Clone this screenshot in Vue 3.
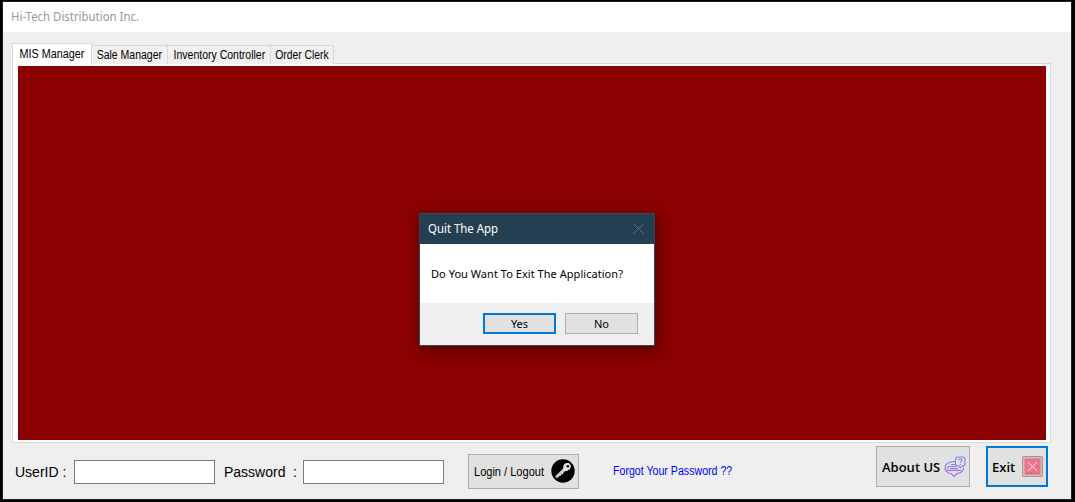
<script setup>
const tabs = [
  { label: 'MIS Manager', cls: 'mis' },
  { label: 'Sale Manager', cls: 'sale' },
  { label: 'Inventory Controller', cls: 'inventory' },
  { label: 'Order Clerk', cls: 'clerk' },
]
</script>

<template>
  <div class="screen">
    <main class="window">
      <header class="titlebar"><span class="app-title">Hi-Tech Distribution Inc.</span></header>

      <nav class="tabs">
        <button v-for="(tab, i) in tabs" :key="tab.label" class="tab" :class="[tab.cls, { active: i === 0 }]">
          <span>{{ tab.label }}</span>
        </button>
      </nav>
      <section class="panel"><div class="canvas"></div></section>

      <footer class="bar">
        <label class="label user">UserID :</label>
        <input class="field" type="text" />
        <label class="label pass"><span>Password</span><span>:</span></label>
        <input class="field" type="password" />
        <button class="btn login">
          <span class="login-text">Login / Logout</span>
          <svg width="24" height="24" viewBox="0 0 24 24">
            <circle cx="12" cy="12" r="11.7" fill="#000" />
            <path d="M12.600 6 14.600 4.200 17.500 3.700 20 6.400 19.200 9.800 16.500 11.800 13.700 12.200 12.500 13.400 12 15 10.300 15.200 9.800 16.800 8 17.200 6.900 18.600 4.600 18.700 4.600 17 12 9.800Z" fill="#e4e4e4" />
            <circle cx="16.800" cy="7.200" r="1.300" fill="#000" />
            <path d="M6 17.600 12.600 11.200" stroke="#888" stroke-width=".6" />
          </svg>
        </button>
        <a class="forgot">Forgot Your Password ??</a>
        <button class="btn about">
          <span class="about-text">About US</span>
          <svg width="22" height="22" viewBox="0 0 22 22" fill="none">
            <defs>
              <linearGradient id="violet" x1="0" y1="0" x2="0" y2="22" gradientUnits="userSpaceOnUse">
                <stop stop-color="#668cf4" /><stop offset="1" stop-color="#b45cf0" />
              </linearGradient>
            </defs>
            <g stroke="url(#violet)" stroke-width="1.1">
              <path d="M11 5.500C5 5.200 1 8 1 12c0 2.600 2 4.500 4.500 5.300l1.500.2 3 3 3-3c4.300-.6 6.600-2.600 6.600-6" />
              <path d="M14 1h4.500c1.500 0 2.500 1 2.500 2.500v4c0 1.500-1 2.500-2.500 2.500h-.7l-1.600 1.800L15 10h-1c-1.500 0-2.500-1-2.500-2.500v-4C11.500 2 12.500 1 14 1Z" />
              <path d="M4.500 10.500h8M7 8.500h4M3 14.500h14M6 12.600h8M4.500 10.500 3 13.500" />
              <path d="M14.700 4.200c0-2 3.200-2 3.200 0 0 1.200-1.600 1.200-1.600 2.600M16.300 8v.8" />
            </g>
          </svg>
        </button>
        <button class="btn exit">
          <span class="exit-text">Exit</span>
          <svg width="21" height="21" viewBox="0 0 21 21">
            <rect x=".6" y=".6" width="19.800" height="19.800" rx="1.200" fill="#e7ce97" stroke="#b18cab" stroke-width="1.200" />
            <rect x="2.900" y="2.900" width="15.200" height="15.200" fill="#ed7591" stroke="#c37b91" stroke-width=".8" />
            <path d="M6 6.200 15 15M15 6.200 6 15" stroke="#ffe1e7" stroke-width="1" />
            <path d="M5 17.300h11" stroke="#c3477a" stroke-width="1" stroke-dasharray="1 1" />
          </svg>
        </button>
      </footer>
    </main>

    <div class="dialog" role="dialog">
      <div class="dialog-head">
        <span class="dialog-title">Quit The App</span>
        <svg width="11" height="11" viewBox="0 0 11 11"><path d="M.5.5l10 10M10.500.5l-10 10" stroke="#5d707e" fill="none" /></svg>
      </div>
      <div class="dialog-body"><span class="question">Do You Want To Exit The Application?</span></div>
      <div class="dialog-foot">
        <button class="btn choice yes">Yes</button>
        <button class="btn choice">No</button>
      </div>
    </div>
  </div>
</template>

<style>
body { margin: 0; background: #000; }
</style>

<style scoped>
* { box-sizing: border-box; }
button, input { margin: 0; padding: 0; font: inherit; color: inherit; border-radius: 0; outline: 0; }
span, label, a { white-space: nowrap; }
svg { display: block; flex: none; }
.screen { position: relative; width: 1075px; height: 502px; padding: 1px 3px 2px 2px; background: #000; overflow: hidden; color: #000; font-family: "Liberation Sans", Arial, sans-serif; }
.window { width: 1070px; height: 499px; border: 1px solid #202020; background: #efefef; }
.titlebar { height: 30px; background: #fff; padding: 0 0 1px 8px; display: flex; align-items: center; color: #999; font: 12px "Noto Sans", sans-serif; }
.app-title { transform: scaleX(.95); transform-origin: left; }
.tabs { position: relative; z-index: 1; display: flex; align-items: flex-end; height: 32px; padding-left: 9px; }
.tab { height: 19px; border: 1px solid #d9d9d9; border-left: 0; border-bottom: 0; background: #f0f0f0; display: flex; align-items: center; justify-content: center; font-size: 12px; }
.tab span { transform: scaleX(.875); }
.tab.active { height: 22px; border-left: 1px solid #d9d9d9; background: #fff; margin-bottom: -1px; padding-bottom: 2px; }
.mis { width: 80px; }
.sale { width: 76px; }
.inventory { width: 103px; }
.clerk { width: 63px; }
.tab.mis span { transform: scaleX(.9); }
.tab.clerk span { transform: scaleX(.86); }
.panel { width: 1039px; height: 380px; margin: -1px 0 0 9px; padding: 2px 4px 2px 5px; border: 1px solid #d9d9d9; background: #fff; }
.canvas { height: 374px; background: #8b0000; }
.bar { display: flex; align-items: flex-start; padding-left: 12px; margin-top: 3px; }
.label { margin-top: 17px; font-size: 14px; line-height: 18px; }
.user { width: 59px; }
.pass { width: 79px; margin-left: 9px; display: flex; justify-content: space-between; padding-right: 6px; }
.field { width: 141px; height: 24px; margin-top: 14px; border: 1px solid #7a7a7a; background: #fff; }
.btn { display: flex; align-items: center; border: 1px solid #adadad; background: #e1e1e1; }
.login { width: 111px; height: 35px; margin: 8px 0 0 24px; padding: 0 3px 2px 5px; justify-content: space-between; font-size: 12px; }
.login-text { margin-top: 2px; transform: scaleX(.92); transform-origin: left; }
.forgot { width: 120px; margin: 18px 0 0 34px; font-size: 12px; line-height: 14px; color: #00f; transform: scaleX(.885); transform-origin: left; }
.about { width: 94px; height: 41px; margin-left: 143px; padding: 0 3px 0 5px; justify-content: space-between; font: 600 13px "Open Sans", "Noto Sans", sans-serif; }
.exit { width: 62px; height: 41px; margin-left: 16px; padding: 0 3px 0 4px; border: 2px solid #0078d7; justify-content: space-between; font: 600 13px "Open Sans", "Noto Sans", sans-serif; }
.dialog { position: absolute; left: 419px; top: 213px; width: 236px; height: 133px; border: 1px solid #34495a; background: #efefef; box-shadow: 2px 4px 13px rgba(0, 0, 0, .42); font-family: "Noto Sans", sans-serif; }
.dialog-head { height: 30px; padding: 0 10px 2px 8px; display: flex; align-items: center; justify-content: space-between; background: #243f52; color: #fff; font-size: 12px; }
.dialog-title { transform: scaleX(.95); transform-origin: left; }
.dialog-body { height: 59px; padding-left: 11px; display: flex; align-items: center; background: #fff; font-size: 11px; }
.question { letter-spacing: .04px; }
.dialog-foot { display: flex; gap: 9px; padding: 10px 0 0 63px; }
.choice { width: 73px; height: 21px; justify-content: center; font-size: 11px; }
.yes { border: 2px solid #0078d7; }
</style>
